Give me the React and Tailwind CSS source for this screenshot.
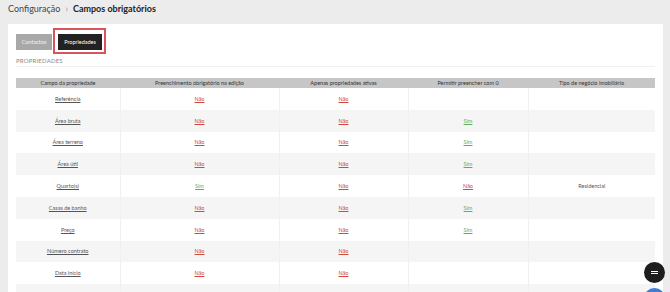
import React from 'react';

const rows = [
  { name: 'Referência', edit: 'Não', active: 'Não', zero: null, type: '' },
  { name: 'Área bruta', edit: 'Não', active: 'Não', zero: 'Sim', type: '' },
  { name: 'Área terreno', edit: 'Não', active: 'Não', zero: 'Sim', type: '' },
  { name: 'Área útil', edit: 'Não', active: 'Não', zero: 'Sim', type: '' },
  { name: 'Quarto(s)', edit: 'Sim', active: 'Não', zero: 'Não', type: 'Residencial' },
  { name: 'Casas de banho', edit: 'Não', active: 'Não', zero: 'Sim', type: '' },
  { name: 'Preço', edit: 'Não', active: 'Não', zero: 'Sim', type: '' },
  { name: 'Número contrato', edit: 'Não', active: 'Não', zero: null, type: '' },
  { name: 'Data início', edit: 'Não', active: 'Não', zero: null, type: '' },
  { name: '', edit: null, active: null, zero: null, type: '' },
];

const YesNo = ({ value }) => {
  if (!value) return null;
  return (
    <span className={value === 'Sim' ? 'underline text-[#5cae5c]' : 'underline text-[#d0493f]'}>
      {value}
    </span>
  );
};

const App = () => {
  return (
    <div className="w-[670px] h-[292px] overflow-hidden bg-[#ececec] flex" style={{ fontFamily: 'Lato, "Open Sans", sans-serif' }}>
      <div className="flex-1 flex flex-col pl-2 pr-[7px]">
        <div className="h-[24px] shrink-0 pt-[3px] flex items-start gap-[5px] text-[9px] leading-[12px] text-[#444]">
          <span>Configuração</span>
          <span className="text-[#999]">›</span>
          <span className="font-bold text-[#222]">Campos obrigatórios</span>
        </div>
        <div className="flex-1 bg-white px-2">
          <div className="flex items-start pt-[4px]">
            <button className="block mt-[6px] h-[16px] w-[36px] bg-[#a8a8a8] text-[#f4f4f4] text-[5.5px] leading-[16px]">Contactos</button>
            <div className="ml-[1px] w-[53px] h-[26px] border-2 border-[#d9545a] pl-[3px] pt-[4px]">
              <button className="block h-[16px] w-[44px] bg-[#222] text-white text-[5.5px] leading-[16px]">Propriedades</button>
            </div>
          </div>
          <div className="mt-[4px] h-[9px] border-b border-[#f0f0f0] text-[6px] leading-[6px] tracking-[0.2px] text-[#8a8a8a]">PROPRIEDADES</div>
          <table className="mt-[11px] w-[639px] border-collapse text-[5.5px] text-[#555] table-fixed">
            <colgroup>
              <col className="w-[104px]" />
              <col className="w-[159px]" />
              <col className="w-[129px]" />
              <col className="w-[120px]" />
              <col className="w-[127px]" />
            </colgroup>
            <thead>
              <tr className="bg-[#c6c6c6] text-[#333]">
                <th className="h-[10px] p-0 font-normal leading-[10px]">Campo da propriedade</th>
                <th className="h-[10px] p-0 font-normal leading-[10px]">Preenchimento obrigatório na edição</th>
                <th className="h-[10px] p-0 font-normal leading-[10px]">Apenas propriedades ativas</th>
                <th className="h-[10px] p-0 font-normal leading-[10px]">Permitir preencher com 0</th>
                <th className="h-[10px] p-0 font-normal leading-[10px]">Tipo de negócio imobiliário</th>
              </tr>
            </thead>
            <tbody>
              {rows.map((r, i) => (
                <tr key={i} className={i % 2 === 0 ? 'bg-white' : 'bg-[#f5f5f5]'}>
                  <td className="h-[21.8px] p-0 text-center border-r border-[#f0f0f0]"><span className="underline">{r.name}</span></td>
                  <td className="h-[21.8px] p-0 text-center border-r border-[#f0f0f0]"><YesNo value={r.edit} /></td>
                  <td className="h-[21.8px] p-0 text-center border-r border-[#f0f0f0]"><YesNo value={r.active} /></td>
                  <td className="h-[21.8px] p-0 text-center border-r border-[#f0f0f0]"><YesNo value={r.zero} /></td>
                  <td className="h-[21.8px] p-0 text-center">{r.type}</td>
                </tr>
              ))}
            </tbody>
          </table>
        </div>
      </div>
      <div className="relative w-0">
        <div className="absolute left-[-26px] top-[262px] w-[21px] h-[21px] rounded-full bg-[#1e1e1e] flex flex-col items-center justify-center gap-[1.5px]">
          <span className="block w-[7px] h-[1px] bg-white"></span>
          <span className="block w-[7px] h-[1px] bg-white"></span>
        </div>
        <div className="absolute left-[-26px] top-[288px] w-[21px] h-[21px] rounded-full bg-[#3b7dd8]"></div>
      </div>
    </div>
  );
};

export default App;
